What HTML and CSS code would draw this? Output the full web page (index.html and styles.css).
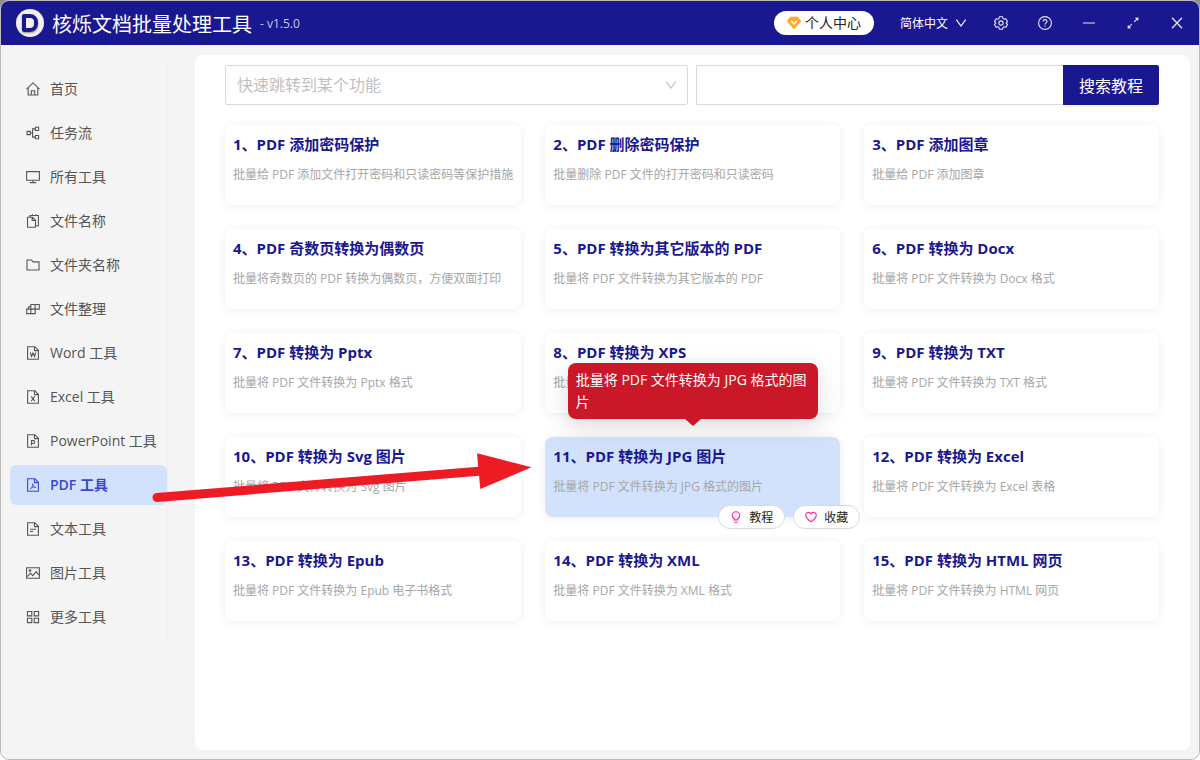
FILE: index.html
```
<!DOCTYPE html>
<html lang="zh-CN">
<head>
    <meta charset="UTF-8">
    <meta name="viewport" content="width=device-width, initial-scale=1.0">
    <title>核烁文档批量处理工具</title>
    <link rel="stylesheet" href="styles.css">
</head>
<body>

    <div class="window">
        <header class="titlebar">
            <div class="logo"><span class="logo-mark"></span></div>
            <h1>核烁文档批量处理工具</h1>
            <span class="version">- v1.5.0</span>
            <button class="user-center">
                <svg viewBox="0 0 14 14"><path d="M3.4 1.3h7.2L13.5 5.2 7 12.7.5 5.2z" fill="#ffa928" stroke="#ffa928" stroke-linejoin="round"/><path d="M4.3 5l2.7 3 2.7-3" stroke="#fff" stroke-width="1.7"/></svg>
                个人中心
            </button>
            <button class="language">
                简体中文
                <svg viewBox="0 0 12 12"><path d="M1.3 2.6L6 9l4.7-6.4"/></svg>
            </button>
            <button class="tool" aria-label="设置">
                <svg viewBox="0 0 14 14"><path d="M5.4.8h3.2l.5 1.8 1 .6 1.8-.5 1.6 2.8-1.3 1.3v.4l1.3 1.3-1.6 2.8-1.8-.5-1 .6-.5 1.8H5.4l-.5-1.8-1-.6-1.8.5L.5 8.500l1.300-1.300v-.4L.5 5.500l1.600-2.800 1.800.5 1-.6z" stroke-linejoin="round"/><circle cx="7" cy="7" r="2.1"/></svg>
            </button>
            <button class="tool" aria-label="帮助">
                <svg viewBox="0 0 14 14"><circle cx="7" cy="7" r="6.4"/><path d="M5 5.6C5 4.3 5.900 3.600 7 3.600s2 .7 2 1.800c0 1.500-2 1.500-2 3.100M7 9.500v1.200"/></svg>
            </button>
            <button class="tool" aria-label="最小化">
                <svg viewBox="0 0 14 14"><path d="M1 7h12"/></svg>
            </button>
            <button class="tool" aria-label="最大化">
                <svg viewBox="0 0 14 14"><path d="M8.2 5.8l3-3M5.8 8.2l-3 3"/><path d="M8.8 1.8l3.7-.4-.4 3.7zM5.2 12.2l-3.7.4.4-3.7z" fill="currentColor" stroke="none"/></svg>
            </button>
            <button class="tool" aria-label="关闭">
                <svg viewBox="0 0 14 14"><path d="M2 1.8l10 10.4M12 1.8L2 12.2" stroke-width="1.3"/></svg>
            </button>
        </header>

        <div class="layout">
            <nav class="sidebar">
                <a href="#"><svg viewBox="0 0 14 14"><path d="M.5 7.2L7 .9l6.5 6.3M2.2 6v7h9.6V6M5.3 13V8.8h3.4V13"/></svg>首页</a>
                <a href="#"><svg viewBox="0 0 14 14"><path d="M1.1 5.4h3.2v3.2H1.1zM9.4 1.3h3.2v3.2H9.4zM9.4 9.5h3.2v3.2H9.4zM4.3 7h2.3M9.4 2.9H6.6v8.2h2.8"/></svg>任务流</a>
                <a href="#"><svg viewBox="0 0 14 14"><path d="M.6 1.6h12.8v8.6H.6zM7 10.2v2.3M3.7 12.6h6.6"/></svg>所有工具</a>
                <a href="#"><svg viewBox="0 0 14 14"><path d="M1.5 3.200h5l3 3v7.100h-8zM6.200 3.200v3.300h3.300M4 3.200V1.500h8.400v10.300H9.500M6.500.3v1.200M10 .3v1.200"/></svg>文件名称</a>
                <a href="#"><svg viewBox="0 0 14 14"><path d="M1 2h4.4l1.7 1.9H13V12H1z"/></svg>文件夹名称</a>
                <a href="#"><svg viewBox="0 0 14 14"><path d="M4.8 2.5h8.5v4.6H4.8zM.7 7.1h8.5v4.5H.7zM9.1 2.5v4.6M4.9 7.1v4.5M4.8 4.8H2.5v2.3"/></svg>文件整理</a>
                <a href="#"><svg viewBox="0 0 14 14"><path d="M1.6.7h7.2l3.6 3.6v9H1.6zM8.5.7v3.9h3.9M4.3 6.5l1.2 4L7 7l1.5 3.5 1.2-4"/></svg>Word 工具</a>
                <a href="#"><svg viewBox="0 0 14 14"><path d="M1.6.7h7.2l3.6 3.6v9H1.6zM8.5.7v3.9h3.9M5.2 6.4l3.6 4.7M8.8 6.4l-3.6 4.7"/></svg>Excel 工具</a>
                <a href="#"><svg viewBox="0 0 14 14"><path d="M1.6.7h7.2l3.6 3.6v9H1.6zM8.5.7v3.9h3.9M5.5 11.4V6.6h1.8a1.4 1.4 0 010 2.9H5.5"/></svg>PowerPoint 工具</a>
                <a href="#" class="active"><svg viewBox="0 0 14 14"><path d="M1.6.7h7.2l3.6 3.6v9H1.6zM8.5.7v3.9h3.9"/><path d="M6.6 5.6c.6 2.4 1.4 3.6 3.4 3.9M6.8 6c0 2.4-1.1 4.5-2.8 5.3M4.8 10c1.5-.9 3.2-1 4.8-.7" stroke-width=".8"/></svg>PDF 工具</a>
                <a href="#"><svg viewBox="0 0 14 14"><path d="M1.6.7h7.2l3.6 3.6v9H1.6zM8.5.7v3.9h3.9M4 7.2h6M4 9.5h3.2"/></svg>文本工具</a>
                <a href="#"><svg viewBox="0 0 14 14"><path d="M.6 1.7h12.8v10.6H.6zM1.5 10.5l3-3.4 2.3 2.5 3.4-4 2.9 3.6"/><circle cx="4" cy="4.5" r=".8"/></svg>图片工具</a>
                <a href="#"><svg viewBox="0 0 14 14"><path d="M1.4 1.5h4.4v4.4H1.4zM8.2 1.5h4.4v4.4H8.2zM1.4 8.2h4.4v4.4H1.4zM8.2 8.2h4.4v4.4H8.2z"/></svg>更多工具</a>
            </nav>

            <main class="content">
                <form class="search-row">
                    <div class="jump">
                        <select aria-label="快速跳转到某个功能">
                            <option>快速跳转到某个功能</option>
                        </select>
                        <svg viewBox="0 0 12 12"><path d="M1.3 2.6L6 9l4.7-6.4"/></svg>
                    </div>
                    <div class="search">
                        <input type="text" aria-label="搜索教程">
                        <button type="button">搜索教程</button>
                    </div>
                </form>

                <div class="cards">
                    <a href="#" class="card">
                        <h2>1、PDF 添加密码保护</h2>
                        <p>批量给 PDF 添加文件打开密码和只读密码等保护措施</p>
                    </a>
                    <a href="#" class="card">
                        <h2>2、PDF 删除密码保护</h2>
                        <p>批量删除 PDF 文件的打开密码和只读密码</p>
                    </a>
                    <a href="#" class="card">
                        <h2>3、PDF 添加图章</h2>
                        <p>批量给 PDF 添加图章</p>
                    </a>
                    <a href="#" class="card">
                        <h2>4、PDF 奇数页转换为偶数页</h2>
                        <p>批量将奇数页的 PDF 转换为偶数页，方便双面打印</p>
                    </a>
                    <a href="#" class="card">
                        <h2>5、PDF 转换为其它版本的 PDF</h2>
                        <p>批量将 PDF 文件转换为其它版本的 PDF</p>
                    </a>
                    <a href="#" class="card">
                        <h2>6、PDF 转换为 Docx</h2>
                        <p>批量将 PDF 文件转换为 Docx 格式</p>
                    </a>
                    <a href="#" class="card">
                        <h2>7、PDF 转换为 Pptx</h2>
                        <p>批量将 PDF 文件转换为 Pptx 格式</p>
                    </a>
                    <a href="#" class="card">
                        <h2>8、PDF 转换为 XPS</h2>
                        <p>批量将 PDF 文件转换为 XPS 格式</p>
                    </a>
                    <a href="#" class="card">
                        <h2>9、PDF 转换为 TXT</h2>
                        <p>批量将 PDF 文件转换为 TXT 格式</p>
                    </a>
                    <a href="#" class="card">
                        <h2>10、PDF 转换为 Svg 图片</h2>
                        <p>批量将 PDF 文件转换为 Svg 图片</p>
                    </a>
                    <div class="card-wrap">
                        <a href="#" class="card selected">
                            <h2>11、PDF 转换为 JPG 图片</h2>
                            <p>批量将 PDF 文件转换为 JPG 格式的图片</p>
                        </a>
                        <div class="tooltip" role="tooltip">批量将 PDF 文件转换为 JPG 格式的图片</div>
                        <div class="card-actions">
                            <button><svg viewBox="0 0 12 12"><path d="M4.2 8.9V7.7C2.9 7 2.2 5.9 2.2 4.5a3.8 3.8 0 017.6 0c0 1.4-.7 2.5-2 3.2v1.2z" fill="#fff0f6"/><path d="M4.5 11.3h3"/></svg>教程</button>
                            <button><svg viewBox="0 0 12 12"><path d="M6 10.8C3.4 9 .7 6.9 .7 4.2 .7 1.3 4.3 .3 6 2.9 7.7 .3 11.3 1.3 11.3 4.2 11.3 6.9 8.6 9 6 10.8z" fill="#fff0f6"/></svg>收藏</button>
                        </div>
                    </div>
                    <a href="#" class="card">
                        <h2>12、PDF 转换为 Excel</h2>
                        <p>批量将 PDF 文件转换为 Excel 表格</p>
                    </a>
                    <a href="#" class="card">
                        <h2>13、PDF 转换为 Epub</h2>
                        <p>批量将 PDF 文件转换为 Epub 电子书格式</p>
                    </a>
                    <a href="#" class="card">
                        <h2>14、PDF 转换为 XML</h2>
                        <p>批量将 PDF 文件转换为 XML 格式</p>
                    </a>
                    <a href="#" class="card">
                        <h2>15、PDF 转换为 HTML 网页</h2>
                        <p>批量将 PDF 文件转换为 HTML 网页</p>
                    </a>
                </div>
            </main>
        </div>

        <!-- guide arrow from the menu item to the card -->
        <svg class="arrow" viewBox="0 0 380 40">
            <path d="M5 45.5L330 19" stroke="#ed1c24" stroke-width="9" stroke-linecap="round"/>
            <path d="M325 1.3L379.5 15.3 328.3 37z" fill="#ed1c24" stroke="none"/>
        </svg>
    </div>

</body>
</html>
```
FILE: styles.css
```
* {
    box-sizing: border-box;
}

body {
    margin: 0;
    font-family: 'Open Sans', 'Noto Sans CJK SC', sans-serif;
    font-size: 14px;
    background: linear-gradient(#8f8f8f 58px, #fff 58px);
}

button {
    font-family: inherit;
    cursor: pointer;
}

a {
    text-decoration: none;
}

svg {
    fill: none;
    stroke: currentColor;
    stroke-width: 1.1;
    flex: none;
}

.window {
    position: relative;
    display: flex;
    flex-direction: column;
    min-height: 100vh;
    border: 1px solid #bbb;
    border-radius: 9px;
    background-color: #f4f4f4;
    overflow: hidden;
}

/* title bar */
.titlebar {
    display: flex;
    align-items: center;
    height: 44px;
    padding-left: 15px;
    background-color: #1a1891;
    color: #fff;
}

.logo {
    display: flex;
    justify-content: center;
    align-items: center;
    width: 28px;
    height: 28px;
    border-radius: 50%;
    background-color: #f0f0f2;
}

.logo-mark {
    width: 16px;
    height: 18px;
    border: 4px solid #1a1891;
    border-radius: 2px 8px 8px 2px;
    box-shadow: 0 1px 2px rgba(0, 0, 0, 0.4);
}

.titlebar h1 {
    margin: 0 8px;
    font-size: 20px;
    font-weight: 400;
}

.version {
    margin-right: auto;
    font-size: 12px;
    color: #c8c8e4;
}

.titlebar button {
    display: flex;
    align-items: center;
    justify-content: center;
    border: none;
    background: none;
    color: #fff;
}

.titlebar button svg {
    width: 14px;
    height: 14px;
}

.titlebar .user-center {
    gap: 4px;
    height: 24px;
    margin-right: 14px;
    padding: 0 13px;
    border-radius: 12px;
    background-color: #fff;
    color: #222;
    font-size: 14px;
    line-height: 20px;
}

.titlebar .language {
    gap: 7px;
    padding: 0 12px;
    font-size: 12px;
}

.titlebar .language svg {
    width: 12px;
    height: 12px;
}

.titlebar .tool {
    width: 44px;
    height: 44px;
    padding: 0;
    color: #e6e6f5;
}

/* layout */
.layout {
    display: flex;
    flex: 1;
    align-items: flex-start;
}

.sidebar {
    width: 167px;
    margin: 20px 27px 0 0;
    padding-left: 9px;
    border-right: 1px solid #efefef;
}

.sidebar a {
    display: flex;
    align-items: center;
    gap: 10px;
    height: 40px;
    margin: 4px 0;
    padding-left: 16px;
    border-radius: 6px;
    color: #555;
    line-height: 20px;
}

.sidebar svg {
    width: 14px;
    height: 14px;
}

.sidebar a.active {
    background-color: #d3e2fc;
    color: #3a45d0;
    font-weight: 600;
}

.content {
    flex: 1;
    align-self: stretch;
    margin: 10px 9px 9px 0;
    padding: 10px 31px 10px 30px;
    border-radius: 8px;
    background-color: #fff;
}

/* search */
.search-row {
    display: flex;
    gap: 8px;
    margin-bottom: 20px;
}

.jump,
.search {
    position: relative;
    display: flex;
    flex: 1;
    height: 40px;
}

.jump select {
    flex: 1;
    padding: 0 11px;
    border: 1px solid #d9d9d9;
    border-radius: 2px;
    background: none;
    appearance: none;
    color: #bfbfbf;
    font-family: inherit;
    font-size: 16px;
}

.jump svg {
    position: absolute;
    top: 14px;
    right: 11px;
    width: 12px;
    height: 12px;
    color: #bfbfbf;
    pointer-events: none;
}

.search input {
    flex: 1;
    min-width: 0;
    padding: 0 11px;
    border: 1px solid #d9d9d9;
    border-right: none;
    border-radius: 2px 0 0 2px;
    font-family: inherit;
    font-size: 16px;
}

.search button {
    width: 96px;
    border: none;
    border-radius: 0 2px 2px 0;
    background-color: #1a1891;
    box-shadow: 0 2px 0 rgba(0, 0, 0, 0.04);
    color: #fff;
    font-size: 16px;
}

/* cards */
.cards {
    display: grid;
    grid-template-columns: repeat(3, 1fr);
    gap: 24px;
}

.card {
    display: block;
    height: 80px;
    padding: 8px;
    border-radius: 8px;
    background-color: #fff;
    box-shadow: 0 1px 10px rgba(0, 0, 0, 0.07);
}

.card h2 {
    margin: 0 0 10px;
    color: #1a1891;
    font-size: 15px;
    font-weight: 700;
    line-height: 22px;
}

.card p {
    margin: 0;
    color: #a6a6a6;
    font-size: 12px;
    line-height: 20px;
    white-space: nowrap;
}

.card-wrap {
    position: relative;
}

.card.selected {
    background-color: #d3e2fc;
}

.tooltip {
    position: absolute;
    left: 50%;
    bottom: calc(100% + 18px);
    width: 250px;
    margin-left: -125px;
    padding: 6px 8px;
    border-radius: 8px;
    background-color: #ca1829;
    box-shadow: 0 6px 16px rgba(0, 0, 0, 0.08), 0 9px 28px 8px rgba(0, 0, 0, 0.05);
    color: #fff;
    line-height: 22px;
}

.tooltip::after {
    content: '';
    position: absolute;
    top: 100%;
    left: 50%;
    margin-left: -8px;
    border: 8px solid transparent;
    border-top: 7px solid #ca1829;
    border-bottom: none;
}

.card-actions {
    position: absolute;
    right: -20px;
    bottom: -12px;
    display: flex;
    gap: 8px;
}

.card-actions button {
    display: flex;
    align-items: center;
    gap: 7px;
    height: 24px;
    padding: 0 11px;
    border: 1px solid #d9d9d9;
    border-radius: 12px;
    background-color: #fff;
    color: #222;
    font-size: 12px;
}

.card-actions svg {
    width: 12px;
    height: 12px;
    stroke: #eb2f96;
}

.arrow {
    position: absolute;
    top: 451px;
    left: 151px;
    width: 380px;
    height: 40px;
    overflow: visible;
    pointer-events: none;
}
```
